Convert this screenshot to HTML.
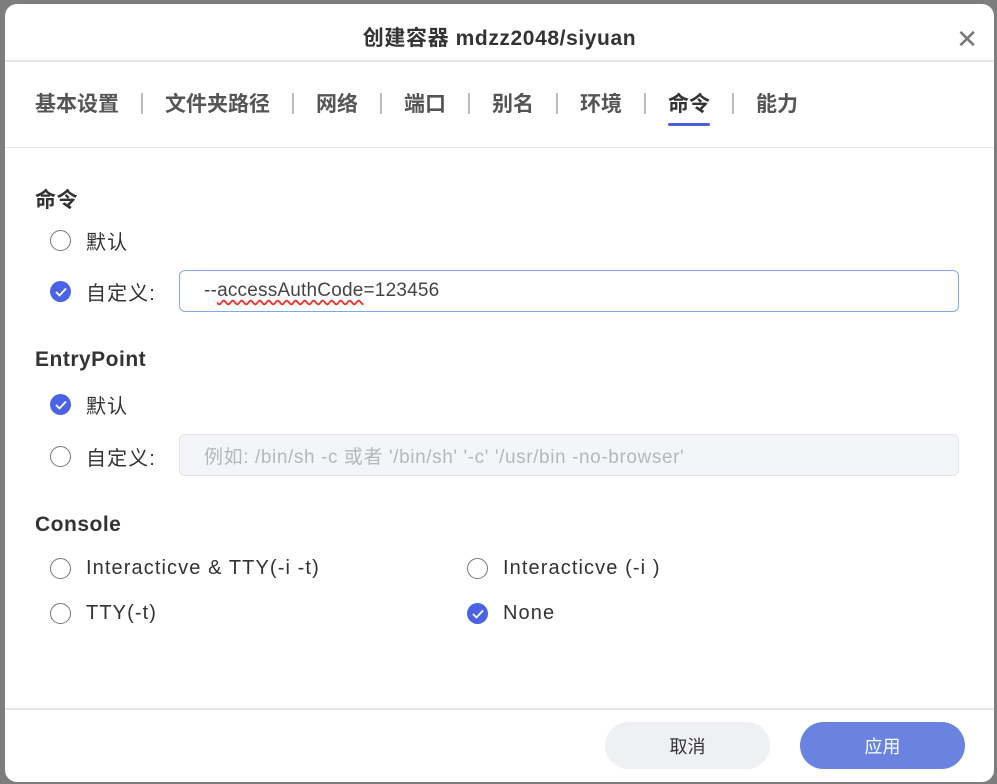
<!DOCTYPE html>
<html><head><meta charset="utf-8"><style>
*{box-sizing:border-box;margin:0;padding:0}
body{width:997px;height:784px;background:#7d7d7d;position:relative;overflow:hidden;font-family:"Liberation Sans","Noto Sans CJK SC",sans-serif;color:#333}
.dlg{position:absolute;left:5px;top:4px;width:989px;height:778px;background:#fff;border-radius:12px;overflow:hidden}
.title{position:absolute;left:0;right:0;top:18px;text-align:center;font-size:21px;letter-spacing:0.6px;font-weight:bold;color:#333}
.close{position:absolute;right:16px;top:22px;font-size:26px;color:#777;line-height:26px}
.hl{position:absolute;left:0;right:0;height:2px;background:#e6e6e6}
.tabs{position:absolute;top:84px;left:30px;font-size:21px;font-weight:bold;color:#555;display:flex;align-items:center}
.tabs span{position:relative}
.sep{width:2px;height:21px;background:#bbb;margin:0 22px}
.act{color:#333}
.act:after{content:"";position:absolute;left:0;right:0;bottom:-8px;height:3px;border-radius:2px;background:#4a5fe0}
.h{position:absolute;left:30px;font-size:21px;letter-spacing:0.5px;font-weight:bold;color:#333}
.r{position:absolute;font-size:20px;letter-spacing:1.1px;color:#333;display:flex;align-items:center}
.c{width:21px;height:21px;border-radius:50%;border:1.5px solid #777;margin-right:15px;display:inline-flex;align-items:center;justify-content:center}
.c.on{border:none;background:#4a63e6}
.inp{position:absolute;left:174px;width:780px;height:42px;border-radius:6px;font-size:19px;letter-spacing:0.2px;padding-left:24px;display:flex;align-items:center}
.btn{position:absolute;top:718px;width:165px;height:47px;border-radius:24px;font-size:18px;display:flex;align-items:center;justify-content:center}
</style></head><body>
<div class="dlg">
<div class="title">创建容器 mdzz2048/siyuan</div>
<div class="close">✕</div>
<div class="hl" style="top:56px"></div>
<div class="tabs"><span>基本设置</span><i class="sep"></i><span>文件夹路径</span><i class="sep"></i><span>网络</span><i class="sep"></i><span>端口</span><i class="sep"></i><span>别名</span><i class="sep"></i><span>环境</span><i class="sep"></i><span class="act">命令</span><i class="sep"></i><span>能力</span></div>
<div class="hl" style="top:143px;height:1px"></div>
<div class="h" style="top:180px">命令</div>
<div class="r" style="left:45px;top:222px"><i class="c"></i>默认</div>
<div class="r" style="left:45px;top:273px"><i class="c on"><svg width="12" height="10" viewBox="0 0 12 10"><path d="M1 5l3.5 3.5L11 1.5" stroke="#fff" stroke-width="1.8" fill="none"/></svg></i>自定义:</div>
<div class="inp" style="top:266px;border:1px solid #7fa8f0;color:#444"><span>--<span style="text-decoration:underline wavy #e33;text-underline-offset:3px">accessAuthCode</span>=123456</span></div>
<div class="h" style="top:344px">EntryPoint</div>
<div class="r" style="left:45px;top:386px"><i class="c on"><svg width="12" height="10" viewBox="0 0 12 10"><path d="M1 5l3.5 3.5L11 1.5" stroke="#fff" stroke-width="1.8" fill="none"/></svg></i>默认</div>
<div class="r" style="left:45px;top:438px"><i class="c"></i>自定义:</div>
<div class="inp" style="top:430px;background:#f4f5f8;border:1px solid #e3e5ea;color:#b5b7bd;font-size:19px;letter-spacing:0.6px">例如: /bin/sh -c 或者 '/bin/sh' '-c' '/usr/bin -no-browser'</div>
<div class="h" style="top:509px">Console</div>
<div class="r" style="left:45px;top:553px"><i class="c"></i>Interacticve &amp; TTY(-i -t)</div>
<div class="r" style="left:462px;top:553px"><i class="c"></i>Interacticve (-i )</div>
<div class="r" style="left:45px;top:598px"><i class="c"></i>TTY(-t)</div>
<div class="r" style="left:462px;top:598px"><i class="c on"><svg width="12" height="10" viewBox="0 0 12 10"><path d="M1 5l3.5 3.5L11 1.5" stroke="#fff" stroke-width="1.8" fill="none"/></svg></i>None</div>
<div class="hl" style="top:704px"></div>
<div class="btn" style="left:600px;background:#eff0f4;color:#333">取消</div>
<div class="btn" style="left:795px;background:#6a82e0;color:#fff">应用</div>
</div>
</body></html>
